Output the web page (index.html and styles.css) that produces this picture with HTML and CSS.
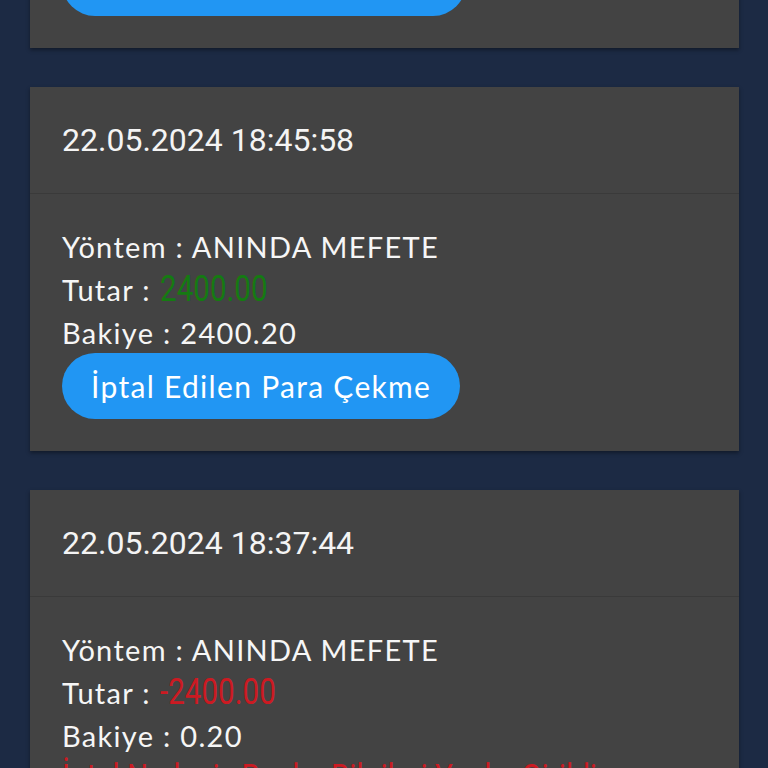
FILE: index.html
```html
<!DOCTYPE html>
<html lang="tr">
<head>
<meta charset="utf-8">
<title>İşlem Geçmişi</title>
<link rel="stylesheet" href="styles.css">
</head>
<body>
<div class="list">
  <div class="card">
    <div class="card-head">22.05.2024 19:02:11</div>
    <div class="card-body">
      <div class="row">Yöntem : ANINDA MEFETE</div>
      <div class="row">Tutar : <span class="amt pos">2400.00</span></div>
      <div class="row">Bakiye : 2400.20</div>
      <div class="btn">Onaylanmış Para Çekme</div>
    </div>
  </div>
  <div class="card">
    <div class="card-head">22.05.2024 18:45:58</div>
    <div class="card-body">
      <div class="row">Yöntem : ANINDA MEFETE</div>
      <div class="row">Tutar : <span class="amt pos">2400.00</span></div>
      <div class="row">Bakiye : 2400.20</div>
      <div class="btn">İptal Edilen Para Çekme</div>
    </div>
  </div>
  <div class="card">
    <div class="card-head">22.05.2024 18:37:44</div>
    <div class="card-body">
      <div class="row">Yöntem : ANINDA MEFETE</div>
      <div class="row">Tutar : <span class="amt neg">-2400.00</span></div>
      <div class="row">Bakiye : 0.20</div>
      <div class="row"><span class="amt neg">İptal Nedeni : Banka Bilgileri Yanlış Girildi</span></div>
      <div class="btn">İptal Edilen Para Çekme</div>
    </div>
  </div>
</div>
</body>
</html>
```

FILE: styles.css
```css
html, body {
  margin: 0;
  padding: 0;
  background: #1c2a44;
  overflow: hidden;
}
.list {
  display: flex;
  flex-direction: column;
  gap: 39px;
  padding: 0 29px 0 30px;
  margin-top: -316px;
}
.card {
  background: #434343;
  box-shadow: 0 2px 4px rgba(0, 0, 0, 0.4);
}
.card-head {
  font-family: Roboto, "Noto Sans", sans-serif;
  font-size: 32px;
  line-height: 40px;
  height: 40px;
  color: #f4f4f4;
  padding: 33px 32px;
  border-bottom: 1px solid #3a3a3a;
}
.card-body {
  padding: 31px 32px 32px 32px;
  font-family: Lato, "Open Sans", sans-serif;
  font-size: 29px;
  letter-spacing: 1.3px;
  color: #f6f6f6;
}
.row {
  line-height: 43px;
  height: 43px;
  white-space: nowrap;
}
.amt {
  display: inline-block;
  font-family: Roboto, "Liberation Sans", sans-serif;
  font-size: 37px;
  line-height: 30px;
  letter-spacing: 0;
  transform: scaleX(0.8);
  transform-origin: left center;
}
.pos { color: #157a12; }
.neg { color: #cc1a22; }
.btn {
  display: inline-block;
  background: #2196f3;
  color: #ffffff;
  font-size: 30px;
  height: 66px;
  line-height: 66px;
  padding: 0 29px;
  border-radius: 33px;
  margin-top: -1px;
  vertical-align: top;
}
```
